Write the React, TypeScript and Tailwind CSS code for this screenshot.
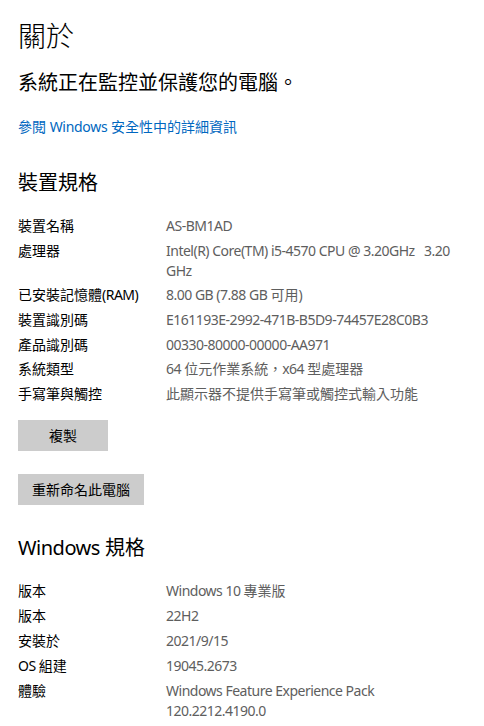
import React from 'react';

const FONT = '"Noto Sans", "Noto Sans CJK TC", sans-serif';

type Spec = { label: string; value: string[] };

const deviceSpecs: Spec[] = [
  { label: '裝置名稱', value: ['AS-BM1AD'] },
  { label: '處理器', value: ['Intel(R) Core(TM) i5-4570 CPU @ 3.20GHz\u00a0\u00a0\u00a03.20', 'GHz'] },
  { label: '已安裝記憶體(RAM)', value: ['8.00 GB (7.88 GB 可用)'] },
  { label: '裝置識別碼', value: ['E161193E-2992-471B-B5D9-74457E28C0B3'] },
  { label: '產品識別碼', value: ['00330-80000-00000-AA971'] },
  { label: '系統類型', value: ['64 位元作業系統，x64 型處理器'] },
  { label: '手寫筆與觸控', value: ['此顯示器不提供手寫筆或觸控式輸入功能'] },
];

const windowsSpecs: Spec[] = [
  { label: '版本', value: ['Windows 10 專業版'] },
  { label: '版本', value: ['22H2'] },
  { label: '安裝於', value: ['2021/9/15'] },
  { label: 'OS 組建', value: ['19045.2673'] },
  { label: '體驗', value: ['Windows Feature Experience Pack', '120.2212.4190.0'] },
];

// Latin runs get tightened so they sit closer to the narrow Windows UI font
function Tight({ text }: { text: string }) {
  const parts = text.split(/([\u0000-\u024f\u00a0]+)/);
  return (
    <>
      {parts.map((p, i) =>
        /[\u0000-\u024f]/.test(p) ? (
          <span key={i} className="tracking-[-0.5px]">{p}</span>
        ) : (
          <React.Fragment key={i}>{p}</React.Fragment>
        ),
      )}
    </>
  );
}

function SpecTable({ rows, gap }: { rows: Spec[]; gap: string }) {
  return (
    <div className={`flex flex-col ${gap}`}>
      {rows.map((r, i) => (
        <div key={i} className="flex text-[14px] leading-[20px]">
          <div className="w-[148px] shrink-0 text-black">
            <Tight text={r.label} />
          </div>
          <div className="text-[#5e5e5e]">
            {r.value.map((line, j) => (
              <div key={j}>
                <Tight text={line} />
              </div>
            ))}
          </div>
        </div>
      ))}
    </div>
  );
}

export default function App() {
  return (
    <div className="min-h-screen bg-white pl-[18px] pt-[17px]" style={{ fontFamily: FONT }}>
      <h1 className="text-[28px] leading-[38px] font-light text-black">關於</h1>
      <p className="mt-[14px] text-[20px] leading-[28px] text-black">系統正在監控並保護您的電腦。</p>
      <a className="mt-[20px] block text-[14px] leading-[20px] text-[#0067c0]">
        參閱 <span className="tracking-[-0.3px]">Windows</span> 安全性中的詳細資訊
      </a>

      <h2 className="mt-[32px] text-[20px] leading-[28px] text-black">裝置規格</h2>
      <div className="mt-[19px]">
        <SpecTable rows={deviceSpecs} gap="gap-[4.67px]" />
      </div>

      <div className="mt-[16px] flex flex-col items-start gap-[23px]">
        <button className="h-[31px] w-[90px] bg-[#cccccc] text-[14px] text-black">複製</button>
        <button className="h-[31px] w-[126px] bg-[#cccccc] text-[14px] text-black">重新命名此電腦</button>
      </div>

      <h2 className="mt-[29px] text-[20px] leading-[28px] text-black">
        <span className="tracking-[-0.5px]">Windows</span> 規格
      </h2>
      <div className="mt-[19px]">
        <SpecTable rows={windowsSpecs} gap="gap-[5px]" />
      </div>
    </div>
  );
}
